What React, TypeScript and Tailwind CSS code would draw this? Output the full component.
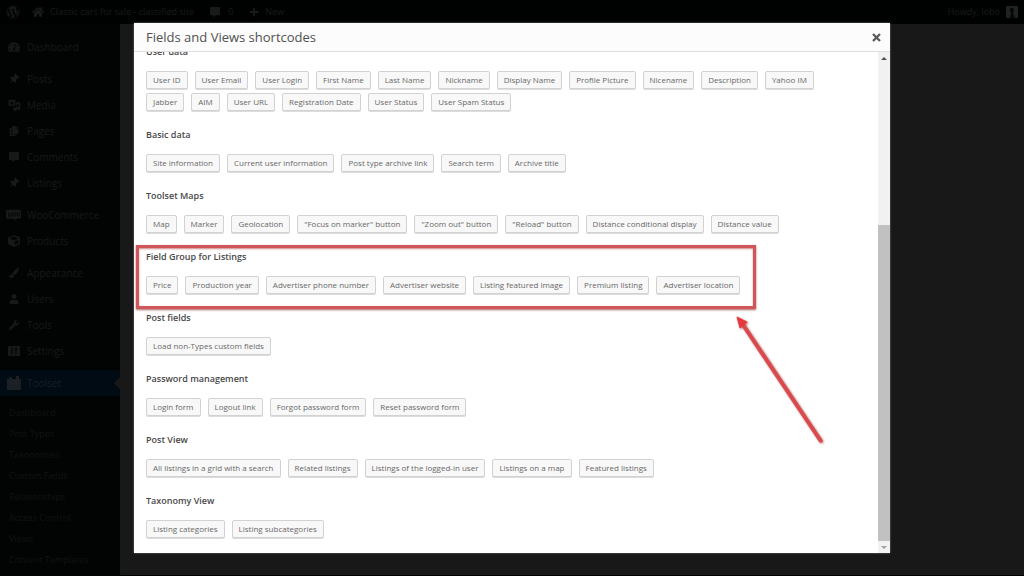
import type { ReactNode } from 'react';
import {
  FaCommentAlt, FaCopy, FaCube, FaHome, FaPaintBrush, FaPlus, FaTachometerAlt,
  FaThumbtack, FaUser, FaWordpress, FaWrench,
} from 'react-icons/fa';

type Section = { title: string; items: string[]; highlighted?: boolean };

const sections: Section[] = [
  {
    title: 'User data',
    items: [
      'User ID', 'User Email', 'User Login', 'First Name', 'Last Name', 'Nickname', 'Display Name',
      'Profile Picture', 'Nicename', 'Description', 'Yahoo IM', 'Jabber', 'AIM', 'User URL',
      'Registration Date', 'User Status', 'User Spam Status',
    ],
  },
  {
    title: 'Basic data',
    items: ['Site information', 'Current user information', 'Post type archive link', 'Search term', 'Archive title'],
  },
  {
    title: 'Toolset Maps',
    items: [
      'Map', 'Marker', 'Geolocation', '"Focus on marker" button', '"Zoom out" button', '"Reload" button',
      'Distance conditional display', 'Distance value',
    ],
  },
  {
    title: 'Field Group for Listings',
    highlighted: true,
    items: [
      'Price', 'Production year', 'Advertiser phone number', 'Advertiser website', 'Listing featured image',
      'Premium listing', 'Advertiser location',
    ],
  },
  { title: 'Post fields', items: ['Load non-Types custom fields'] },
  { title: 'Password management', items: ['Login form', 'Logout link', 'Forgot password form', 'Reset password form'] },
  {
    title: 'Post View',
    items: [
      'All listings in a grid with a search', 'Related listings', 'Listings of the logged-in user',
      'Listings on a map', 'Featured listings',
    ],
  },
  { title: 'Taxonomy View', items: ['Listing categories', 'Listing subcategories'] },
];

function MediaIcon() {
  return (
    <svg viewBox="0 0 20 20" className="size-3.5" fill="currentColor" aria-hidden="true">
      <path d="M2 3h2l1-1h3l1 1h3v8H2zM7 5a2.200 2.200 0 1 0 0 4.400A2.200 2.200 0 0 0 7 5z" fillRule="evenodd" />
      <path d="M13 6h6v9a2.500 2.500 0 1 1-2-2.400V9h-3v7a2.500 2.500 0 1 1-2-2.400h1z" />
    </svg>
  );
}

function WooIcon() {
  return (
    <svg viewBox="0 0 20 16" className="h-3 w-4" aria-hidden="true">
      <path fill="currentColor" d="M2 1h16a2 2 0 0 1 2 2v8a2 2 0 0 1-2 2h-6l1 3-4-3H2a2 2 0 0 1-2-2V3a2 2 0 0 1 2-2z" />
      <path d="m3 4 1 6 2-4 2 4 1-6" fill="none" stroke="#020404" />
      <ellipse cx="12" cy="7" rx="1.500" ry="2.500" fill="none" stroke="#020404" />
      <ellipse cx="16.500" cy="7" rx="1.500" ry="2.500" fill="none" stroke="#020404" />
    </svg>
  );
}

function SettingsIcon() {
  return (
    <svg viewBox="0 0 12 12" className="size-3" aria-hidden="true">
      <path fill="currentColor" d="M0 1h12v10H0z" />
      <path d="M4 2.500v7M8 2.500v7M2.500 7h3M6.500 4.500h3" stroke="#020404" />
    </svg>
  );
}

function ToolsetIcon() {
  return (
    <svg viewBox="0 0 14 14" className="size-3.5" fill="currentColor" aria-hidden="true">
      <path d="M0 3h2V1h3v2h4V0h3v3h2v11H0z" />
    </svg>
  );
}

const menu: { label: string; icon: ReactNode }[][] = [
  [{ label: 'Dashboard', icon: <FaTachometerAlt className="size-3" /> }],
  [
    { label: 'Posts', icon: <FaThumbtack className="size-2.5 rotate-45" /> },
    { label: 'Media', icon: <MediaIcon /> },
    { label: 'Pages', icon: <FaCopy className="size-2.5" /> },
    { label: 'Comments', icon: <FaCommentAlt className="size-2.5" /> },
    { label: 'Listings', icon: <FaThumbtack className="size-2.5 rotate-45" /> },
  ],
  [
    { label: 'WooCommerce', icon: <WooIcon /> },
    { label: 'Products', icon: <FaCube className="size-3" /> },
  ],
  [
    { label: 'Appearance', icon: <FaPaintBrush className="size-2.5" /> },
    { label: 'Users', icon: <FaUser className="size-2.5" /> },
    { label: 'Tools', icon: <FaWrench className="size-2.5" /> },
    { label: 'Settings', icon: <SettingsIcon /> },
  ],
];

const submenu = [
  'Dashboard', 'Post Types', 'Taxonomies', 'Custom Fields', 'Relationships', 'Access Control', 'Views',
  'Content Templates',
];

function AdminBar() {
  return (
    <header className="flex h-6 shrink-0 items-center bg-[#000202] px-1.5 text-[9px] text-[#191b1b]">
      <FaWordpress className="size-3.5" />
      <a href="#site" className="ml-3 flex items-center gap-1.5">
        <FaHome className="size-3" />
        Classic cars for sale - classified site
      </a>
      <a href="#comments" className="ml-4 flex items-center gap-2">
        <FaCommentAlt className="size-2.5" />0
      </a>
      <a href="#new" className="ml-4 flex items-center gap-1.5">
        <FaPlus className="size-2.5" />
        New
      </a>
      <a href="#profile" className="ml-auto flex items-center gap-1.5">
        Howdy, lobo
        <svg viewBox="0 0 12 12" className="size-3" aria-hidden="true">
          <path fill="#202222" d="M0 0h12v12H0z" />
          <path fill="#060808" d="M4 2h3l1 2-1 3 2 5H4l1-5-1-2z" />
        </svg>
      </a>
    </header>
  );
}

function Sidebar() {
  return (
    <nav className="w-[120px] shrink-0 bg-[#020404] pt-2.5 text-[10px] text-[#171919]">
      {menu.map((group) => (
        <ul key={group[0].label} className="mb-1.5">
          {group.map((item) => (
            <li key={item.label}>
              <a href="#menu" className="flex h-[26px] items-center gap-1.5 pl-1.5">
                <span className="flex w-[15px] justify-center">{item.icon}</span>
                {item.label}
              </a>
            </li>
          ))}
        </ul>
      ))}
      <a href="#toolset" className="relative flex h-[26px] items-center gap-1.5 bg-[#000b14] pl-1.5 text-[#1a2024]">
        <span className="flex w-[15px] justify-center"><ToolsetIcon /></span>
        Toolset
        <svg viewBox="0 0 6 12" className="absolute right-0 h-3 w-1.5" aria-hidden="true">
          <path d="M6 0v12L0 6z" fill="#181818" />
        </svg>
      </a>
      <ul className="pt-1.5 pl-[9px] text-[9px] text-[#111313]">
        {submenu.map((label) => (
          <li key={label} className="h-[21px] leading-[21px]">
            <a href="#submenu">{label}</a>
          </li>
        ))}
      </ul>
    </nav>
  );
}

function ShortcodeSection({ title, items, highlighted }: Section) {
  return (
    <section className="relative w-fit">
      <h2 className="text-[9px] leading-3 font-semibold text-[#484848]">{title}</h2>
      <div className="mt-[13px] flex flex-wrap gap-x-[7px] gap-y-1">
        {items.map((item) => (
          <button
            key={item}
            type="button"
            className="h-[18px] rounded-xs border border-[#d2d2d2] bg-[#f8f8f8] px-1.5 text-[8px] leading-4 whitespace-nowrap text-[#686868] shadow-[0_1px_0_#dcdcdc]"
          >
            {item}
          </button>
        ))}
      </div>
      {highlighted && (
        <div className="pointer-events-none absolute -top-1.5 -right-4 -bottom-[15px] -left-2.5 border-3 border-[#d1565b] shadow-[0_1px_2px_#a66,inset_0_1px_2px_#c88]" />
      )}
    </section>
  );
}

function Scrollbar() {
  return (
    <div className="flex w-3 shrink-0 flex-col bg-[#f1f1f1]" aria-hidden="true">
      <svg viewBox="0 0 12 12" className="size-3"><path d="M3 8 6 5l3 3z" fill="#505050" /></svg>
      <div className="flex-[161]" />
      <div className="flex-[317] bg-[#c1c1c1]" />
      <svg viewBox="0 0 12 12" className="size-3"><path d="m3 5 3 3 3-3z" fill="#a0a0a0" /></svg>
    </div>
  );
}

function ShortcodesDialog() {
  return (
    <div
      role="dialog"
      aria-labelledby="dialog-title"
      className="flex min-h-0 flex-1 flex-col bg-white shadow-[0_0_2px_#777]"
    >
      <div className="flex h-[29px] shrink-0 items-center justify-between border-b border-[#dedede] bg-[#fcfcfc] pr-[9px] pl-3">
        <h1 id="dialog-title" className="pt-0.5 text-[13px] text-[#505050]">Fields and Views shortcodes</h1>
        <button type="button" aria-label="Close" className="flex items-center justify-center">
          <svg viewBox="0 0 9 9" className="size-[9px]" aria-hidden="true">
            <path d="m1 1 7 7M8 1 1 8" stroke="#5a5a5a" strokeWidth="2.300" />
          </svg>
        </button>
      </div>
      <div className="flex min-h-0 flex-1">
        <div className="relative flex-1 overflow-hidden pl-3">
          <div className="-mt-1.5 flex flex-col gap-[18px] pr-10">
            {sections.map((section) => <ShortcodeSection key={section.title} {...section} />)}
          </div>
          <svg viewBox="0 0 92 132" className="pointer-events-none absolute top-[262px] left-[600px] h-[132px] w-[92px] drop-shadow-[1px_1px_1px_#b66]" aria-hidden="true">
            <path d="M9.500 11.500 86.500 126.500" stroke="#d94a4e" strokeWidth="4" strokeLinecap="round" />
            <path d="m3 3 10 5-7 6z" fill="#e6393d" stroke="#e6393d" strokeWidth="1" />
          </svg>
        </div>
        <Scrollbar />
      </div>
    </div>
  );
}

export default function App() {
  return (
    <div className="relative flex h-screen flex-col overflow-hidden bg-[#181818] font-['Open_Sans','Noto_Sans',sans-serif]">
      <AdminBar />
      <div className="flex min-h-0 flex-1">
        <Sidebar />
        <main className="flex-1 border-b border-black" />
      </div>
      <div className="absolute inset-0 flex flex-col px-[134px] py-[23px]">
        <ShortcodesDialog />
      </div>
    </div>
  );
}
